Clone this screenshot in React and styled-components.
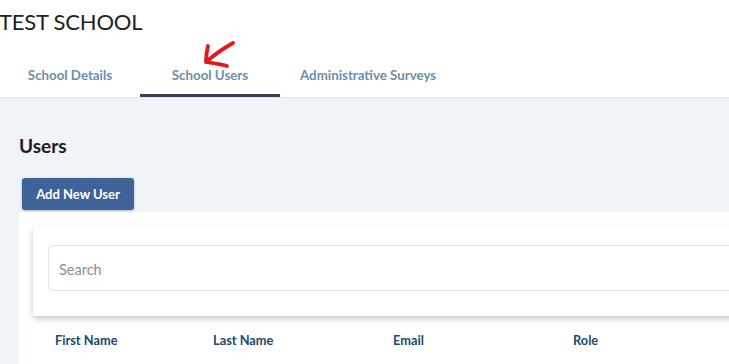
import React from "react";
import styled, { createGlobalStyle } from "styled-components";

const GlobalStyle = createGlobalStyle`
  body {
    margin: 0;
    font-family: Lato, "Noto Sans", sans-serif;
    background: #ffffff;
    overflow: hidden;
  }
`;

const App = () => {
  return (
    <Page>
      <GlobalStyle />
      <Header>
        <Title>TEST SCHOOL</Title>
        <Tabs>
          <Tab>School Details</Tab>
          <Tab active>
            School Users
            <Arrow width="40" height="34" viewBox="0 0 40 34">
              <path
                d="M33 5 C 24 10, 14 17, 6 24 M6 24 C 6 18, 7 12, 8 8 M6 24 C 12 25, 20 26, 27 28"
                fill="none"
                stroke="#e4171b"
                strokeWidth="3.8"
                strokeLinecap="round"
                strokeLinejoin="round"
              />
            </Arrow>
          </Tab>
          <Tab>Administrative Surveys</Tab>
        </Tabs>
      </Header>
      <Body>
        <Heading>Users</Heading>
        <Button>Add New User</Button>
        <Panel>
          <Card>
            <Search placeholder="Search" />
          </Card>
          <TableHead>
            <Col w={158}>First Name</Col>
            <Col w={180}>Last Name</Col>
            <Col w={180}>Email</Col>
            <Col w={180}>Role</Col>
          </TableHead>
        </Panel>
      </Body>
    </Page>
  );
};

// Style
const Page = styled.div`
  width: 729px;
  height: 364px;
  display: flex;
  flex-direction: column;
  overflow: hidden;
`;

const Header = styled.div`
  background: #ffffff;
  border-bottom: 1px solid #e2e6ec;
`;

const Title = styled.h1`
  margin: 0;
  padding: 9px 0 0 0;
  margin-left: -1px;
  font-size: 22px;
  font-weight: 400;
  color: #222;
  letter-spacing: -0.2px;
  line-height: 26px;
`;

const Tabs = styled.div`
  display: flex;
  margin-top: 15px;
`;

const Tab = styled.div`
  position: relative;
  min-width: 140px;
  box-sizing: border-box;
  padding: 6px 20px 0;
  height: 47px;
  display: flex;
  align-items: center;
  justify-content: center;
  font-size: 13.3px;
  font-weight: 700;
  color: #6d8ea9;
  border-bottom: 3px solid ${(p) => (p.active ? "#383c52" : "transparent")};
`;

const Arrow = styled.svg`
  position: absolute;
  left: 60px;
  top: -12px;
`;

const Body = styled.div`
  flex: 1;
  background: #f0f3f8;
  padding: 36px 0 0 0;
  display: flex;
  flex-direction: column;
`;

const Heading = styled.h2`
  margin: 0 0 0 19px;
  font-size: 19px;
  font-weight: 700;
  color: #1c1c24;
  line-height: 24px;
`;

const Button = styled.button`
  align-self: flex-start;
  margin: 20px 0 0 22px;
  height: 32px;
  width: 112px;
  border: none;
  border-radius: 3px;
  background: #3d6399;
  color: #ffffff;
  font-family: inherit;
  font-size: 13px;
  font-weight: 700;
  box-shadow: 0 1px 3px rgba(0, 0, 0, 0.25);
`;

const Panel = styled.div`
  flex: 1;
  margin: 2px 0 0 19px;
  background: #ffffff;
  border-radius: 4px 0 0 0;
  padding: 15px 0 0 14px;
`;

const Card = styled.div`
  height: 89px;
  box-sizing: border-box;
  padding: 18px 0 0 15px;
  background: #ffffff;
  border-radius: 3px 0 0 3px;
  box-shadow: 0 3px 6px rgba(0, 0, 0, 0.22);
  margin-right: -20px;
`;

const Search = styled.input`
  width: 100%;
  height: 46px;
  box-sizing: border-box;
  border: 1px solid #e3e3e3;
  border-radius: 4px;
  padding: 3px 10px 0;
  font-family: inherit;
  font-size: 14.5px;
  outline: none;
  &::placeholder {
    color: #8d8d8d;
  }
`;

const TableHead = styled.div`
  display: flex;
  padding: 16px 0 0 22px;
`;

const Col = styled.div`
  flex-shrink: 0;
  width: ${(p) => p.w}px;
  font-size: 12.8px;
  font-weight: 700;
  color: #1b4a6e;
`;

export default App;
